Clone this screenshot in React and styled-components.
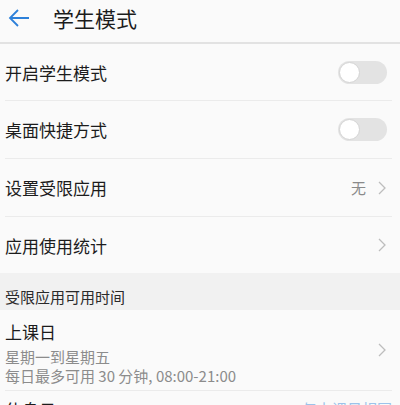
import styled, { createGlobalStyle } from "styled-components";

const GlobalStyle = createGlobalStyle`
  html, body {
    margin: 0;
    padding: 0;
    background: #fafafa;
    font-family: "Noto Sans CJK SC", "Noto Sans", sans-serif;
    color: #1c1c1c;
    overflow: hidden;
  }
`;

const Page = styled.div`
  width: 400px;
  height: 405px;
  overflow: hidden;
  background: #fafafa;
`;

const Header = styled.header`
  height: 42px;
  display: flex;
  align-items: center;
  gap: 22px;
  padding-left: 7px;
  border-bottom: 2px solid #e2e2e2;
  h1 {
    margin: 0;
    font-size: 21px;
    font-weight: 400;
    line-height: 1;
    margin-top: -6px;
  }
`;

const BackButton = styled.svg`
  width: 24px;
  height: 24px;
  margin-top: -6px;
`;

const List = styled.ul`
  list-style: none;
  margin: 0;
  padding: 0;
`;

const Row = styled.li`
  display: flex;
  align-items: ${(props) => (props.top ? "flex-start" : "center")};
  justify-content: space-between;
  min-height: ${(props) => props.height || 58}px;
  margin-left: 5px;
  margin-right: 8px;
  border-bottom: ${(props) => (props.last ? "none" : "1px solid #ebebeb")};
  box-sizing: border-box;
`;

const Label = styled.span`
  font-size: 17px;
  line-height: 1;
`;

const TextBlock = styled.div`
  display: flex;
  flex-direction: column;
  gap: 7px;
  padding-top: 8px;
`;

const Sub = styled.span`
  font-size: 15px;
  color: #8c8c8c;
  line-height: 19px;
`;

const Right = styled.div`
  display: flex;
  align-items: center;
  gap: 12px;
  margin-right: 6px;
  color: #8a8a8a;
  font-size: 15px;
`;

const TopText = styled.span`
  margin-top: 10px;
  font-size: ${(props) => (props.blue ? 15 : 17)}px;
  color: ${(props) => (props.blue ? "#9cc3ea" : "inherit")};
  line-height: 1;
`;

const Toggle = styled.div`
  width: 49px;
  height: 23px;
  border-radius: 12px;
  background: #e3e3e3;
  position: relative;
  margin-right: 5px;
  &::after {
    content: "";
    position: absolute;
    left: 1px;
    top: 1px;
    width: 21px;
    height: 21px;
    border-radius: 50%;
    background: #fff;
    border: 1px solid #d4d4d4;
    box-sizing: border-box;
  }
`;

const SectionTitle = styled.div`
  background: #f1f1f1;
  height: 37px;
  display: flex;
  align-items: center;
  padding-left: 5px;
  padding-top: 10px;
  box-sizing: border-box;
  font-size: 15px;
  color: #2a2a2a;
`;

function Chevron() {
  return (
    <svg width="8" height="14" viewBox="0 0 8 14">
      <path d="M1 1 L7 7 L1 13" fill="none" stroke="#bdbdbd" strokeWidth="1.3" />
    </svg>
  );
}

export default function App() {
  return (
    <Page>
      <GlobalStyle />
      <Header>
        <BackButton viewBox="0 0 24 24">
          <path d="M22 12 H3 M11 4 L3 12 L11 20" fill="none" stroke="#2d80d9" strokeWidth="1.8" />
        </BackButton>
        <h1>学生模式</h1>
      </Header>
      <List>
        <Row height={57}>
          <Label>开启学生模式</Label>
          <Toggle />
        </Row>
        <Row>
          <Label>桌面快捷方式</Label>
          <Toggle />
        </Row>
        <Row>
          <Label>设置受限应用</Label>
          <Right>
            <span>无</span>
            <Chevron />
          </Right>
        </Row>
        <Row last height={56}>
          <Label>应用使用统计</Label>
          <Right>
            <Chevron />
          </Right>
        </Row>
      </List>
      <SectionTitle>受限应用可用时间</SectionTitle>
      <List>
        <Row height={81}>
          <TextBlock>
            <Label>上课日</Label>
            <Sub>
              星期一到星期五
              <br />
              每日最多可用 30 分钟, 08:00-21:00
            </Sub>
          </TextBlock>
          <Right>
            <Chevron />
          </Right>
        </Row>
        <Row height={40} last top>
          <TopText>休息日</TopText>
          <TopText blue>与上课日相同</TopText>
        </Row>
      </List>
    </Page>
  );
}
